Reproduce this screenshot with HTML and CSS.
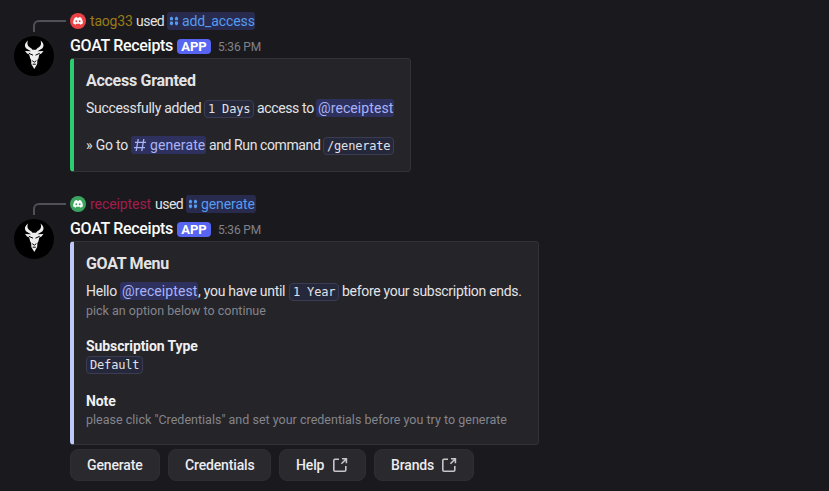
FILE: index.html
```html
<!DOCTYPE html>
<html lang="en">
<head>
<meta charset="utf-8">
<title>GOAT Receipts</title>
<link rel="stylesheet" href="styles.css">
</head>
<body>
<svg width="0" height="0" class="defs" aria-hidden="true">
  <symbol id="goat" viewBox="0 0 40 40">
    <circle cx="20" cy="20" r="20" fill="#000"/>
    <path fill="#eee" d="M14 4.500C10.800 7 10 10 12.300 12.500L17 15.200 11 15 13 17.500 15.200 18.500 16.200 22.500 17.200 24 17.300 28 20.300 33 23.200 28 23.400 24 24.400 22.500 25.300 18.500 27.500 17.500 29.500 15 23.500 15.200 28.200 12.500C30.500 10 29.700 7 26.500 4.500 27.800 8 26.800 10.500 23.300 12.200L22 13.800H18.500L17.200 12.200C13.700 10.500 12.700 8 14 4.500Z"/>
    <path fill="none" stroke="#000" stroke-width="1" d="M14.800 17.300 19 19.200M25.700 17.300 21.500 19.200M18.200 24.700 20.300 26.200 22.300 24.700M18.700 28.200H21.800"/>
  </symbol>
  <symbol id="face" viewBox="0 0 16 16">
    <path fill="#fff" d="M5 4.600 6.800 4.100 7.200 4.800H8.800L9.200 4.100 11 4.600C12.400 6.600 13 8.400 12.800 10.500L10.400 11.700 9.800 10.800H6.200L5.600 11.700 3.200 10.500C3 8.400 3.600 6.600 5 4.600Z"/>
    <ellipse cx="6.300" cy="8.200" rx=".9" ry="1.050" fill="currentColor"/><ellipse cx="9.700" cy="8.200" rx=".9" ry="1.050" fill="currentColor"/>
  </symbol>
  <symbol id="command" viewBox="0 0 10 10">
    <path fill="currentColor" d="M2.500.4 4.200 2 3.800 4.200H1.200L.8 2ZM7.500.4 9.200 2 8.800 4.200H6.200L5.800 2ZM1.200 5.600H3.800L4.200 8 2.500 9.600.8 8ZM6.200 5.600H8.800L9.200 8 7.500 9.600 5.800 8Z"/>
  </symbol>
  <symbol id="launch" viewBox="0 0 16 16">
    <g fill="none" stroke="currentColor" stroke-width="1.600"><path d="M7 2.200H3Q1.800 2.200 1.800 3.400V13Q1.800 14.200 3 14.200H12.600Q13.800 14.200 13.800 13V9"/><path d="M10 1.800H14.400V6.200M14.200 2 9.400 6.800"/></g>
  </symbol>
</svg>
<main class="chat">
  <article class="message">
    <div class="reply">
      <span class="spine"></span>
      <svg class="mini red"><use href="#face"/></svg>
      <span class="user gold">taog33</span><span class="used">used</span>
      <span class="command add"><svg><use href="#command"/></svg><span>add_access</span></span>
    </div>
    <svg class="avatar"><use href="#goat"/></svg>
    <header><span class="name">GOAT Receipts</span><span class="app">APP</span><time>5:36 PM</time></header>
    <section class="embed granted">
      <h2 class="t-granted">Access Granted</h2>
      <p class="row"><span class="t-success">Successfully added</span><code class="w50">1 Days</code><span class="t-access">access to</span><span class="mention w78">@receiptest</span></p>
      <p class="row second"><span class="t-go">» Go to</span><span class="mention channel"><svg viewBox="0 0 14 14"><path d="M5.200 1 3.200 13M10.800 1 8.800 13M2 4.400H13M1 9.600H12"/></svg><span>generate</span></span><span class="t-run">and Run command</span><code class="w71">/generate</code></p>
    </section>
  </article>
  <article class="message">
    <div class="reply">
      <span class="spine"></span>
      <svg class="mini green"><use href="#face"/></svg>
      <span class="user crimson">receiptest</span><span class="used">used</span>
      <span class="command gen"><svg><use href="#command"/></svg><span>generate</span></span>
    </div>
    <svg class="avatar"><use href="#goat"/></svg>
    <header><span class="name">GOAT Receipts</span><span class="app">APP</span><time>5:36 PM</time></header>
    <section class="embed menu">
      <h2 class="t-menu">GOAT Menu</h2>
      <p class="row"><span class="t-hello">Hello</span><span class="mention w78">@receiptest</span><span class="t-until">, you have until</span><code class="w50">1 Year</code><span class="t-ends">before your subscription ends.</span></p>
      <p class="sub t-pick">pick an option below to continue</p>
      <h3 class="t-type">Subscription Type</h3>
      <p class="row value"><code class="w57">Default</code></p>
      <h3 class="t-note">Note</h3>
      <p class="sub t-please">please click "Credentials" and set your credentials before you try to generate</p>
    </section>
    <nav>
      <button class="b-generate">Generate</button>
      <button class="b-credentials">Credentials</button>
      <button class="b-help">Help<svg><use href="#launch"/></svg></button>
      <button class="b-brands">Brands<svg><use href="#launch"/></svg></button>
    </nav>
  </article>
</main>
</body>
</html>
```
FILE: styles.css
```css
* { box-sizing: border-box; }
body { margin: 0; background: #1a1a1e; color: #e3e3e6; font: 14px/18px Roboto, "Noto Sans", sans-serif; overflow: hidden; }
.defs { position: absolute; }
.chat { height: 491px; padding-top: 12px; }
.message { display: grid; grid-template-columns: 56px 1fr; padding-left: 14px; height: 183px; grid-template-rows: 18px 6px 20px 2px auto 36px; align-content: start; }
.message:last-child { height: 296px; }
.reply { grid-column: 2; grid-row: 1; display: flex; align-items: center; position: relative; white-space: nowrap; }
.spine { position: absolute; left: -37px; top: 8px; width: 33px; height: 12px; border: solid #505057; border-width: 2px 0 0 2px; border-top-left-radius: 6px; }
.mini { width: 16px; height: 16px; border-radius: 50%; margin-right: 4px; }
.red { background: #ed4245; color: #ed4245; }
.green { background: #3ba55d; color: #3ba55d; }
.user { flex: none; }
.gold { color: #9b7b16; width: 43px; letter-spacing: -.2px; }
.crimson { color: #a31d4c; width: 62px; letter-spacing: -.08px; }
.used { width: 28px; margin: 0 3px; letter-spacing: -.5px; }
.command { display: flex; align-items: center; height: 18px; padding-left: 2px; border-radius: 3px; background: #282b4e; color: #559cef; letter-spacing: -.1px; }
.command svg { width: 10px; height: 10px; margin-right: 3px; flex: none; }
.add { width: 88px; }
.gen { width: 70px; }
.avatar { grid-column: 1; grid-row: 3 / 6; width: 40px; height: 40px; align-self: start; }
header { grid-column: 2; grid-row: 3; display: flex; align-items: center; height: 20px; white-space: nowrap; }
.name { width: 103px; margin-right: 4px; font-size: 16px; font-weight: 500; letter-spacing: -.3px; color: #fbfbfb; }
.app { width: 34px; height: 15px; border-radius: 4px; background: #5865f2; color: #fff; font-size: 13px; font-weight: 700; line-height: 16px; text-align: center; }
time { margin: 2px 0 0 7px; font-size: 12px; line-height: 16px; letter-spacing: -.15px; color: #818189; }
.embed { grid-column: 2; grid-row: 5; border: 1px solid #323237; border-left: 4px solid #2ecc71; border-radius: 4px; background: #242429; padding: 11px 11px 0 12px; }
.granted { width: 341px; height: 114px; }
.menu { width: 469px; height: 204px; border-left-color: #bdc7f8; }
h2, h3, p { margin: 0; white-space: nowrap; }
h2 { font-size: 16px; font-weight: 700; line-height: 22px; }
.t-granted { letter-spacing: -.28px; }
.t-menu { letter-spacing: -.3px; }
.row { display: flex; align-items: center; gap: 3px; height: 18px; margin-top: 7px; }
.row > * { flex: none; }
.row.second { margin-top: 19px; }
.mention { height: 18px; border-radius: 3px; background: #2e315e; color: #a9b3f7; padding-left: 2px; font-weight: 400; letter-spacing: .1px; }
.w78 { width: 78px; }
.channel { width: 75px; display: flex; align-items: center; }
.channel svg { width: 14px; height: 14px; margin-right: 3px; fill: none; stroke: currentColor; stroke-width: 1.300; }
code { height: 18px; border: 1px solid #3b3c53; border-radius: 4px; background: #25273a; padding-left: 3px; font: 12px/17px "DejaVu Sans Mono", monospace; letter-spacing: -.18px; position: relative; top: 1px; color: #e1e1e5; }
.w50 { width: 50px; } .w57 { width: 57px; } .w71 { width: 71px; }
.t-success { width: 115px; letter-spacing: -.3px; } .t-access { width: 56px; letter-spacing: -.36px; }
.t-go { width: 42px; letter-spacing: -.2px; } .t-run { width: 111px; letter-spacing: -.4px; }
.t-hello { width: 31px; letter-spacing: -.25px; } .t-until { width: 88px; margin-left: -3px; letter-spacing: -.27px; }
.t-ends { letter-spacing: -.3px; }
.sub { font-size: 12.500px; line-height: 16px; color: #85858c; margin-top: 3px; }
h3 { font-size: 14px; font-weight: 700; line-height: 18px; margin-top: 18px; color: #f0f0f2; letter-spacing: -.1px; }
.row.value { margin-top: 0; }
.t-note { margin-top: 19px; }
.t-please { margin-top: 2px; letter-spacing: .01px; }
nav { grid-column: 2; grid-row: 6; display: flex; gap: 8px; padding-top: 4px; }
button { display: flex; align-items: center; height: 32px; border: 1px solid #2e2e33; border-radius: 8px; background: #29292e; color: #ececef; padding: 0 0 0 16px; font: 500 14px/18px Roboto, sans-serif; white-space: nowrap; letter-spacing: -.15px; }
button svg { width: 16px; height: 16px; margin-left: 8px; color: #c5c5ca; }
.b-brands svg { margin-left: 7px; }
.b-generate { width: 90px; } .b-credentials { width: 103px; } .b-help { width: 87px; } .b-brands { width: 100px; }
```
